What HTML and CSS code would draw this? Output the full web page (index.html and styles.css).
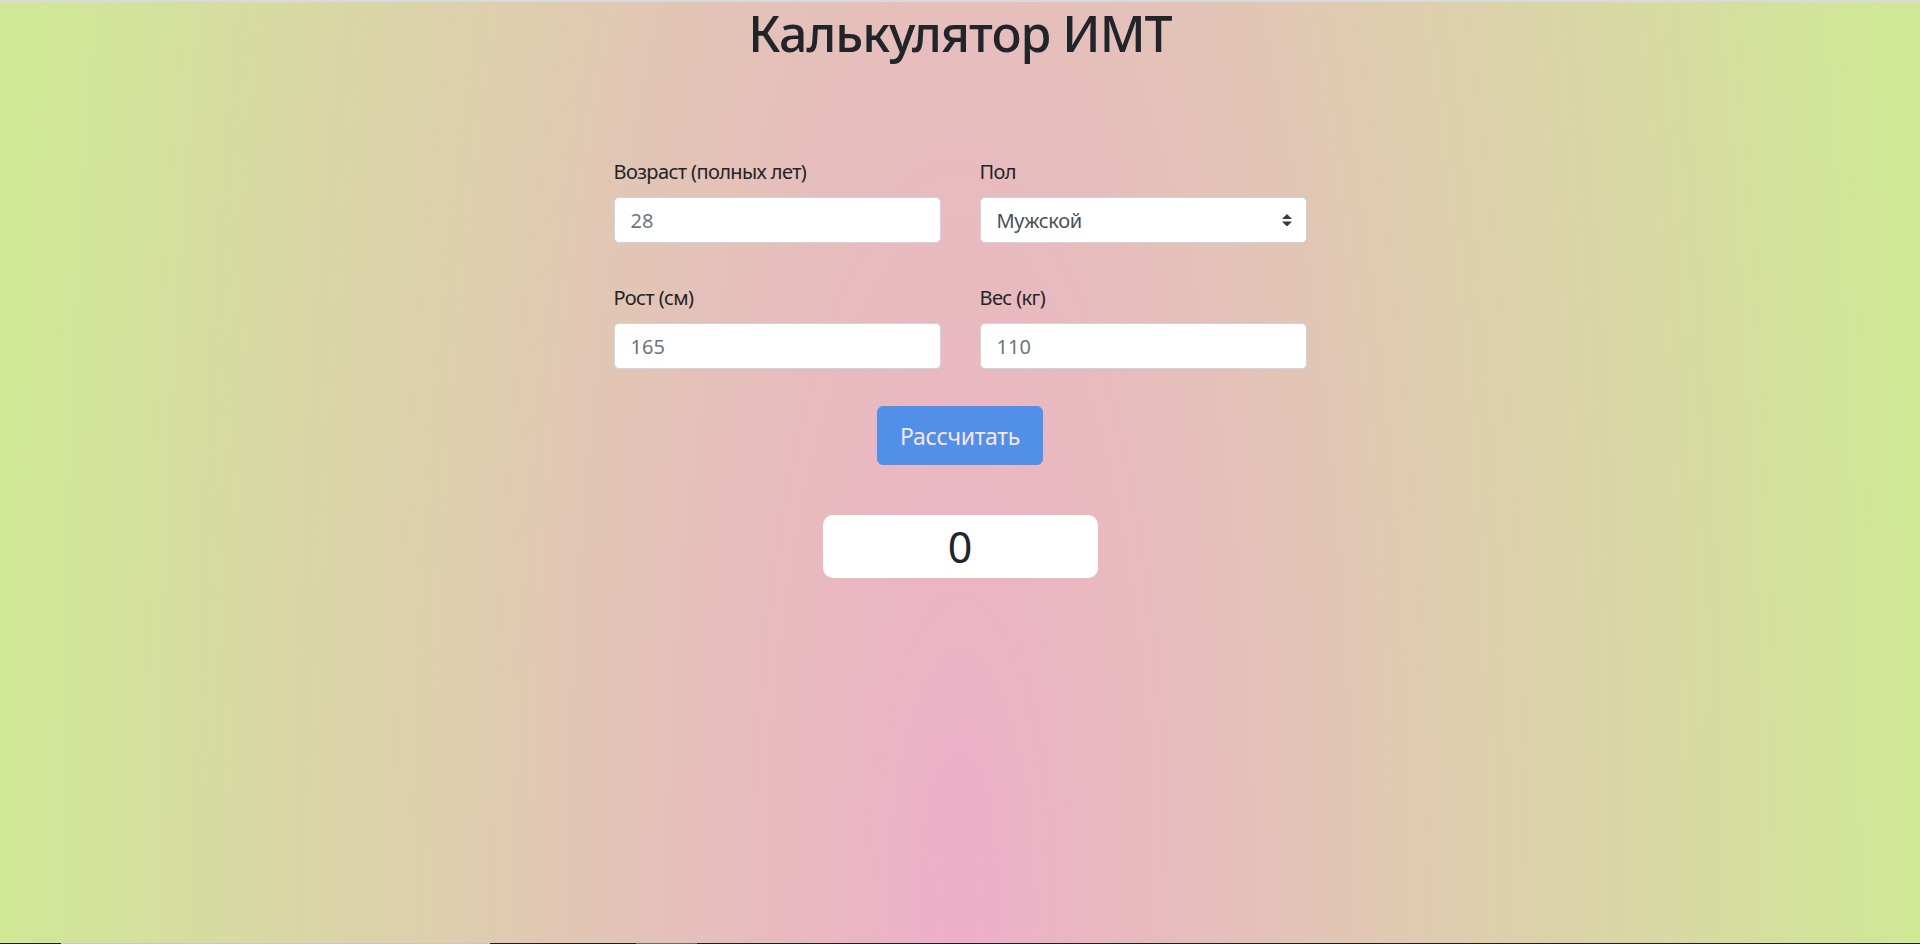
FILE: index.html
```html
<!DOCTYPE html>
<html lang="ru">
<head>
<meta charset="utf-8">
<title>Калькулятор ИМТ</title>
<link rel="stylesheet" href="styles.css">
</head>
<body>
<div class="topbar"></div>
<main class="page">
  <h1 class="title">Калькулятор ИМТ</h1>
  <form class="calc">
    <div class="grid">
      <div class="field">
        <label class="label">Возраст (полных лет)</label>
        <input class="control" type="text" placeholder="28">
      </div>
      <div class="field">
        <label class="label">Пол</label>
        <div class="control select">
          <span class="select-value">Мужской</span>
          <svg class="select-arrows" width="10" height="12.5" viewBox="0 0 4 5"><path d="M2 0L0 2h4zm0 5L0 3h4z" fill="#343a40"/></svg>
        </div>
      </div>
      <div class="field">
        <label class="label">Рост (см)</label>
        <input class="control" type="text" placeholder="165">
      </div>
      <div class="field">
        <label class="label">Вес (кг)</label>
        <input class="control" type="text" placeholder="110">
      </div>
    </div>
    <button class="btn" type="button" disabled>Рассчитать</button>
    <div class="result">0</div>
  </form>
</main>
<div class="bottombar"></div>
</body>
</html>
```

FILE: styles.css
```css
html, body {
  margin: 0;
  padding: 0;
}

body {
  min-height: 100vh;
  display: flex;
  flex-direction: column;
  font-family: "Noto Sans", "Open Sans", sans-serif;
  color: #212529;
  background: radial-gradient(ellipse 960px 3400px at 50% 906px, #eeafc9 0%, #d0e896 100%);
}

.topbar {
  height: 2px;
  background: #dadadc;
}

.page {
  flex: 1;
  display: flex;
  flex-direction: column;
  align-items: center;
}

.title {
  margin: 1px 0 0;
  font-size: 50px;
  line-height: 60px;
  font-weight: 500;
  letter-spacing: -1px;
  color: #212529;
}

.calc {
  margin-top: 94px;
  display: flex;
  flex-direction: column;
  align-items: center;
}

.grid {
  display: grid;
  grid-template-columns: 327px 327px;
  column-gap: 39px;
  row-gap: 40px;
}

.field {
  display: flex;
  flex-direction: column;
}

.label {
  font-size: 20px;
  line-height: 30px;
  margin-bottom: 10px;
  letter-spacing: -0.6px;
  color: #212529;
}

.control {
  box-sizing: border-box;
  height: 46px;
  width: 100%;
  padding: 0 16px;
  border: 1px solid #ced4da;
  border-radius: 5px;
  background: #fff;
  font-family: inherit;
  font-size: 20px;
  color: #495057;
  outline: none;
}

.control::placeholder {
  color: #6c757d;
}

.select {
  display: flex;
  align-items: center;
  justify-content: space-between;
  padding-right: 14px;
}

.select-value {
  color: #495057;
  letter-spacing: -0.3px;
}

.btn {
  margin-top: 37px;
  width: 166px;
  height: 59px;
  border: 1px solid #007bff;
  border-radius: 6px;
  background: #007bff;
  color: #fff;
  font-family: inherit;
  font-size: 23px;
  letter-spacing: -0.3px;
  opacity: 0.65;
  padding: 0;
}

.result {
  margin-top: 50px;
  width: 275px;
  height: 63px;
  border-radius: 10px;
  background: #fff;
  display: flex;
  align-items: center;
  justify-content: center;
  font-size: 43px;
  color: #212529;
}

.bottombar {
  height: 1px;
  background: linear-gradient(to right,
    #1e1e1e 0, #1e1e1e 61px,
    #c8c8c8 61px, #c8c8c8 490px,
    #1e1e1e 490px, #1e1e1e 636px,
    #6a6a6a 636px, #6a6a6a 697px,
    #1e1e1e 697px, #1e1e1e 100%);
}
```
